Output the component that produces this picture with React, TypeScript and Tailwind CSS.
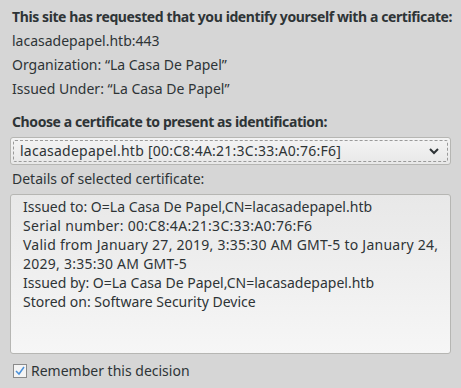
import React from "react";

export default function App() {
  const font = { fontFamily: '"Noto Sans", "Open Sans", sans-serif' };
  return (
    <div className="w-[461px] h-[388px] bg-[#d6d6d6] text-[#2e3436] text-[14px] overflow-hidden" style={font}>
      <div className="px-[12px] pt-[5px]">
        <div className="font-bold leading-[24px] tracking-[-0.4px] whitespace-nowrap">This site has requested that you identify yourself with a certificate:</div>
        <div className="leading-[24px]">lacasadepapel.htb:443</div>
        <div className="leading-[24px]">Organization: “La Casa De Papel”</div>
        <div className="leading-[24px]">Issued Under: “La Casa De Papel”</div>
        <div className="font-bold leading-[24px] mt-[9px] tracking-[-0.4px] whitespace-nowrap">Choose a certificate to present as identification:</div>
      </div>
      <div className="mx-[10px] mt-[3px] h-[28px] rounded-[3px] border border-[#b6b6b3] bg-gradient-to-b from-[#f4f4f4] to-[#e8e8e8] p-[2px]">
        <div className="h-full border border-dashed border-[#9a9a9a] rounded-[2px] flex items-center justify-between pl-[6px] pr-[7px]">
          <span className="leading-[20px] tracking-[0.25px]">lacasadepapel.htb [00:C8:4A:21:3C:33:A0:76:F6]</span>
          <svg width="12" height="8" viewBox="0 0 12 8"><path d="M2 2 L6 6 L10 2" stroke="#2e3436" strokeWidth="2" fill="none" /></svg>
        </div>
      </div>
      <div className="px-[12px] mt-[4px] leading-[20px]">Details of selected certificate:</div>
      <div className="mx-[10px] mt-[5px] h-[160px] rounded-[3px] border border-[#b6b6b3] bg-gradient-to-b from-[#e8e8e8] to-[#f6f6f6] pl-[12px] pr-[4px] pt-[2px] leading-[19px]">
        <div>Issued to: O=La Casa De Papel,CN=lacasadepapel.htb</div>
        <div className="tracking-[0.3px]">Serial number: 00:C8:4A:21:3C:33:A0:76:F6</div>
        <div className="tracking-[0.25px]">Valid from January 27, 2019, 3:35:30 AM GMT-5 to January 24, 2029, 3:35:30 AM GMT-5</div>
        <div>Issued by: O=La Casa De Papel,CN=lacasadepapel.htb</div>
        <div>Stored on: Software Security Device</div>
      </div>
      <div className="flex items-center px-[13px] mt-[7px] gap-[4px]">
        <div className="w-[14px] h-[14px] border border-[#8a8a8a] bg-[#f4f4f4] flex items-center justify-center">
          <svg width="12" height="12" viewBox="0 0 12 12"><path d="M2 6 L5 9 L10 2" stroke="#4a90d9" strokeWidth="1.5" fill="none" /></svg>
        </div>
        <span className="leading-[20px]">Remember this decision</span>
      </div>
    </div>
  );
}
